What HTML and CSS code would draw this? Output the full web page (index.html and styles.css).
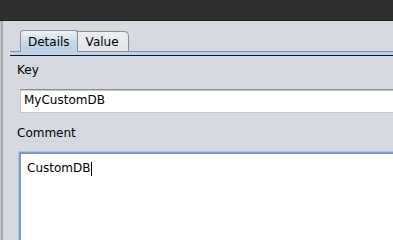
FILE: index.html
```html
<!DOCTYPE html>
<html>
<head>
<meta charset="utf-8">
<link rel="stylesheet" href="styles.css">
</head>
<body>
<div class="titlebar"></div>
<div class="window">
  <div class="tabstrip">
    <div class="tab tab-active">Details</div>
    <div class="tab tab-idle">Value</div>
  </div>
  <div class="tabband"></div>
  <div class="panel">
    <div class="label">Key</div>
    <div class="field field-key">MyCustomDB</div>
    <div class="label label-comment">Comment</div>
    <div class="field field-comment">CustomDB<span class="caret"></span></div>
  </div>
</div>
</body>
</html>
```
FILE: styles.css
```css
html, body {
  margin: 0;
  padding: 0;
  width: 393px;
  height: 240px;
  overflow: hidden;
  background: #d6d9e0;
  font-family: "DejaVu Sans", sans-serif;
  font-size: 12px;
  line-height: 14px;
  color: #000;
}

.titlebar {
  height: 20px;
  background: #313031;
  border-bottom: 1px solid #232223;
}

.window {
  border-left: 1px solid #c9cbcf;
  box-shadow: inset 2px 0 0 #a4a7ac;
  height: 219px;
  padding-left: 2px;
  overflow: hidden;
}

.tabstrip {
  display: flex;
  align-items: flex-end;
  margin-top: 9px;
  margin-left: 7px;
  padding-left: 10px;
  border-bottom: 1px solid #8a9099;
}

.tab {
  border: 1px solid #8c9299;
  border-bottom: none;
  white-space: nowrap;
}

.tab-active {
  padding: 4px 7px 3px 7px;
  margin-bottom: -1px;
  border-radius: 4px 3px 0 0;
  background: linear-gradient(#eef3f8, #c6d7e8 55%, #bdd1e5);
}

.tab-idle {
  padding: 3px 9px 2px 8px;
  margin-left: -1px;
  border-color: #8d8d8d;
  border-radius: 0 5px 0 0;
  background: linear-gradient(#eceef1, #e2e4e8);
}

.tabband {
  margin-left: 7px;
  height: 3px;
  background: #bfd2e6;
  border-bottom: 1px solid #0d1a33;
}

.panel {
  padding: 7px 0 0 14px;
}

.label {
  height: 14px;
}

.label-comment {
  margin-top: 13px;
}

.field {
  background: #fff;
  white-space: nowrap;
}

.field-key {
  margin: 12px 0 0 3px;
  width: 400px;
  height: 14px;
  padding: 3px 3px 5px 3px;
  border: 1px solid #c6c6c6;
  border-top-color: #8e8e8e;
  box-shadow: inset 0 1px 0 #c9c9c9;
}

.field-comment {
  margin: 11px 0 0 1px;
  width: 400px;
  height: 100px;
  padding: 9px 8px 0 8px;
  border: 1px solid #a9c5df;
  box-shadow: inset 0 0 0 2px #7b9dc1;
}

.caret {
  display: inline-block;
  width: 1px;
  height: 14px;
  margin-left: 1px;
  background: #000;
  vertical-align: top;
  margin-top: 1px;
}
```
